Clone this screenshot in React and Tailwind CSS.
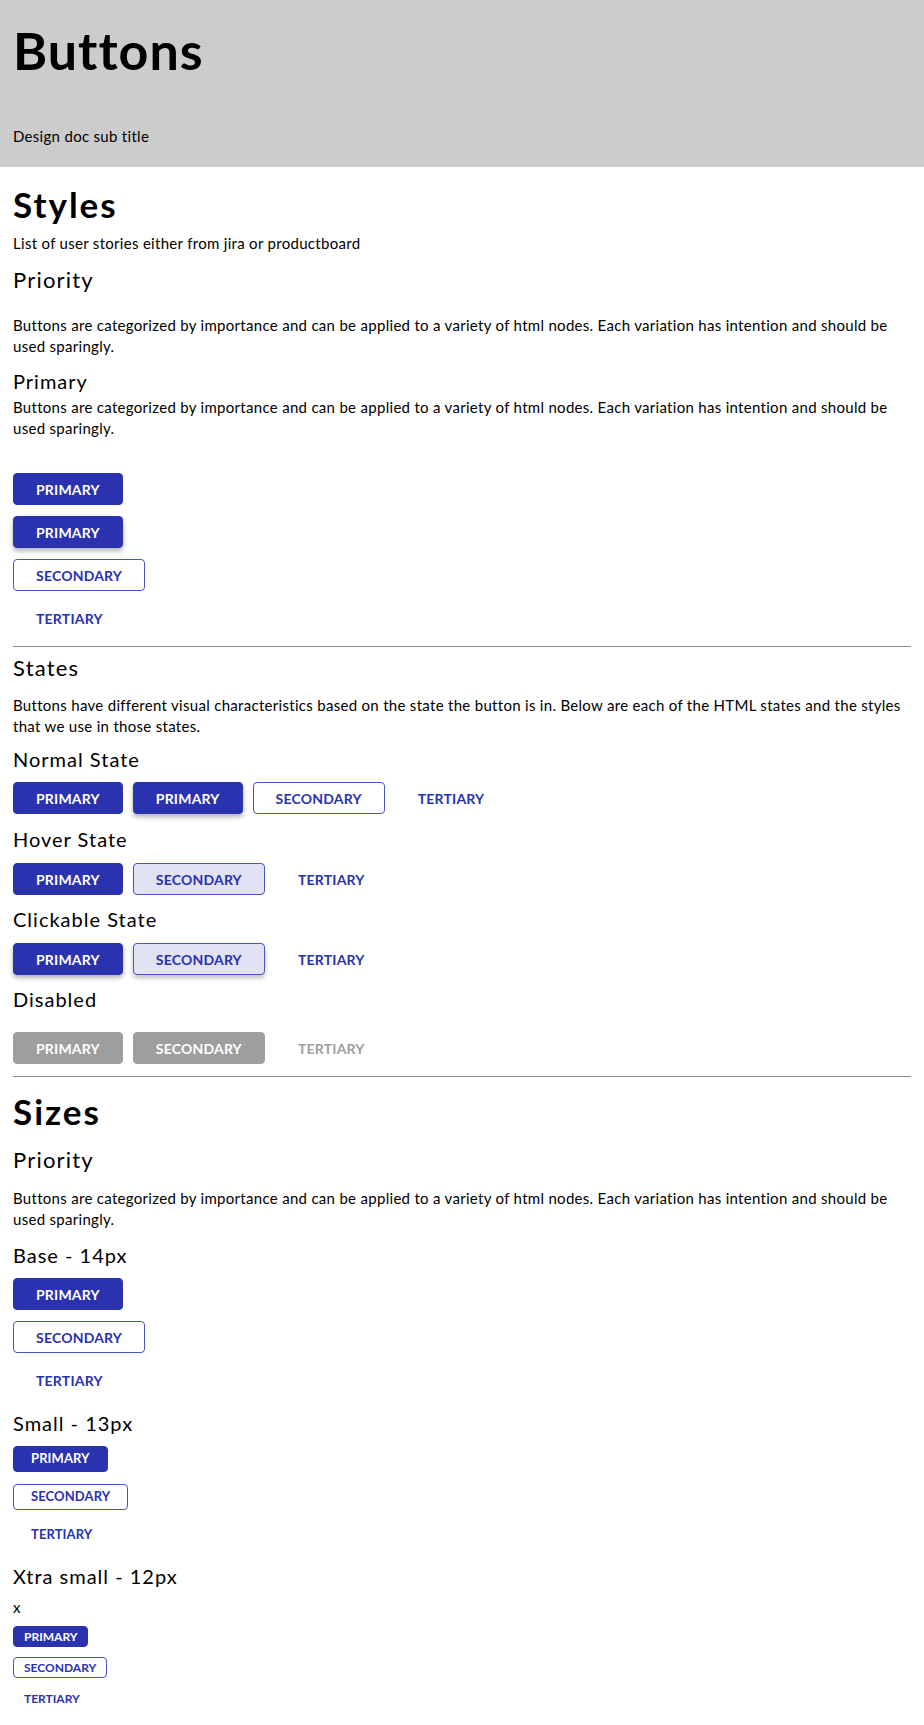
const font = { fontFamily: 'Lato, "Liberation Sans", sans-serif' };

const base = 'flex items-center justify-center rounded-[4px] font-bold uppercase';
const sizes = {
  md: 'h-8 px-[22px] text-[14px] tracking-[0.2px]',
  sm: 'h-[26px] px-[17px] text-[13px] tracking-[0.1px]',
  xs: 'h-[21px] px-[10px] text-[12px] tracking-[0px]',
};
const kinds = {
  primary: 'bg-[#2a32b0] text-white border border-[#2a32b0]',
  raised: 'bg-[#2a32b0] text-white border border-[#2a32b0] shadow-[0_3px_5px_rgba(0,0,0,0.3)]',
  secondary: 'bg-white text-[#2a32b0] border border-[#4b53c2]',
  secondaryHover: 'bg-[#e1e2f4] text-[#2a32b0] border border-[#4b53c2]',
  secondaryRaised: 'bg-[#e1e2f4] text-[#2a32b0] border border-[#4b53c2] shadow-[0_3px_5px_rgba(0,0,0,0.25)]',
  tertiary: 'bg-transparent text-[#2a32b0] border border-transparent',
  disabled: 'bg-[#9e9e9e] text-white border border-[#9e9e9e]',
  tertiaryDisabled: 'bg-transparent text-[#9e9e9e] border border-transparent',
};

function Btn({ kind = 'primary', size = 'md', children }) {
  return <button className={`${base} ${sizes[size]} ${kinds[kind]}`}>{children}</button>;
}

function Para({ className = '', children }) {
  return <p className={`text-[15px] leading-[21px] tracking-[0.3px] ${className}`}>{children}</p>;
}

function H1({ className = '', children }) {
  return <h1 className={`text-[35px] leading-[38px] font-bold tracking-[2px] ${className}`}>{children}</h1>;
}

function H2({ className = '', children }) {
  return <h2 className={`text-[22px] leading-[24px] tracking-[1.2px] ${className}`}>{children}</h2>;
}

function H3({ className = '', children }) {
  return <h3 className={`text-[20px] leading-[22px] tracking-[1px] ${className}`}>{children}</h3>;
}

const lorem =
  'Buttons are categorized by importance and can be applied to a variety of html nodes. Each variation has intention and should be used sparingly.';

export default function App() {
  return (
    <div style={font} className="w-[924px] h-[1725px] bg-white text-black overflow-hidden">
      <header className="bg-[#cccccc] px-[13px] pt-[19px] pb-[21px] h-[167px]">
        <h1 className="text-[52px] leading-[1.2] font-bold tracking-[1px]">Buttons</h1>
        <p className="mt-[45px] text-[15px] leading-[20px] tracking-[0.3px]">Design doc sub title</p>
      </header>

      <main className="px-[13px]">
        {/* Styles */}
        <H1 className="mt-[18px]">Styles</H1>
        <p className="mt-[10px] text-[15px] leading-[20px] tracking-[0.3px]">List of user stories either from jira or productboard</p>
        <H2 className="mt-[15px]">Priority</H2>
        <Para className="mt-[23px]">{lorem}</Para>
        <H3 className="mt-[13px]">Primary</H3>
        <Para className="mt-[5px] leading-[20px]">{lorem}</Para>

        <div className="mt-[34px] flex flex-col items-start gap-[11px]">
          <Btn>Primary</Btn>
          <Btn kind="raised">Primary</Btn>
          <Btn kind="secondary">Secondary</Btn>
          <Btn kind="tertiary">Tertiary</Btn>
        </div>

        <hr className="mt-[12px] border-0 border-t border-[#8c8c8c]" />

        {/* States */}
        <H2 className="mt-[9px]">States</H2>
        <Para className="mt-[15px]">
          Buttons have different visual characteristics based on the state the button is in. Below are each of the HTML states and the styles that we use in those states.
        </Para>

        <H3 className="mt-[11px]">Normal State</H3>
        <div className="mt-[12px] flex gap-[10px]">
          <Btn>Primary</Btn>
          <Btn kind="raised">Primary</Btn>
          <Btn kind="secondary">Secondary</Btn>
          <Btn kind="tertiary">Tertiary</Btn>
        </div>

        <H3 className="mt-[14px]">Hover State</H3>
        <div className="mt-[13px] flex gap-[10px]">
          <Btn>Primary</Btn>
          <Btn kind="secondaryHover">Secondary</Btn>
          <Btn kind="tertiary">Tertiary</Btn>
        </div>

        <H3 className="mt-[13px]">Clickable State</H3>
        <div className="mt-[13px] flex gap-[10px]">
          <Btn kind="raised">Primary</Btn>
          <Btn kind="secondaryRaised">Secondary</Btn>
          <Btn kind="tertiary">Tertiary</Btn>
        </div>

        <H3 className="mt-[13px]">Disabled</H3>
        <div className="mt-[22px] flex gap-[10px]">
          <Btn kind="disabled">Primary</Btn>
          <Btn kind="disabled">Secondary</Btn>
          <Btn kind="tertiaryDisabled">Tertiary</Btn>
        </div>

        <hr className="mt-[12px] border-0 border-t border-[#8c8c8c]" />

        {/* Sizes */}
        <H1 className="mt-[15px]">Sizes</H1>
        <H2 className="mt-[18px]">Priority</H2>
        <Para className="mt-[16px]">{lorem}</Para>

        <H3 className="mt-[14px]">Base - 14px</H3>
        <div className="mt-[12px] flex flex-col items-start gap-[11px]">
          <Btn>Primary</Btn>
          <Btn kind="secondary">Secondary</Btn>
          <Btn kind="tertiary">Tertiary</Btn>
        </div>

        <H3 className="mt-[16px]">Small - 13px</H3>
        <div className="mt-[12px] flex flex-col items-start gap-[12px]">
          <Btn size="sm">Primary</Btn>
          <Btn size="sm" kind="secondary">Secondary</Btn>
          <Btn size="sm" kind="tertiary">Tertiary</Btn>
        </div>

        <H3 className="mt-[17px]">Xtra small - 12px</H3>
        <p className="mt-[10px] text-[15px] leading-[20px]">x</p>
        <div className="mt-[9px] flex flex-col items-start gap-[10px]">
          <Btn size="xs">Primary</Btn>
          <Btn size="xs" kind="secondary">Secondary</Btn>
          <Btn size="xs" kind="tertiary">Tertiary</Btn>
        </div>
      </main>
    </div>
  );
}
